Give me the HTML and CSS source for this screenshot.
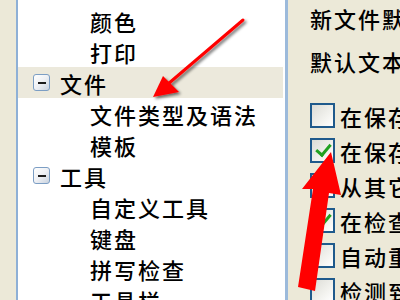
FILE: index.html
```html
<!DOCTYPE html>
<html lang="zh">
<head>
<meta charset="utf-8">
<link rel="stylesheet" href="styles.css">
</head>
<body>
<div class="window">
  <div class="strip"></div>
  <div class="tree">
    <div class="row child">颜色</div>
    <div class="row child">打印</div>
    <div class="row group selected"><span class="toggle"></span>文件</div>
    <div class="row child">文件类型及语法</div>
    <div class="row child">模板</div>
    <div class="row group"><span class="toggle"></span>工具</div>
    <div class="row child">自定义工具</div>
    <div class="row child">键盘</div>
    <div class="row child">拼写检查</div>
    <div class="row child">工具栏</div>
  </div>
  <div class="panel">
    <div class="label first">新文件默认</div>
    <div class="label">默认文本编</div>
    <div class="checks">
      <div class="check"><span class="box"></span>在保存时</div>
      <div class="check"><span class="box checked"></span>在保存时</div>
      <div class="check"><span class="box"></span>从其它程</div>
      <div class="check"><span class="box checked"></span>在检查时</div>
      <div class="check"><span class="box"></span>自动重新</div>
      <div class="check"><span class="box"></span>检测到文</div>
    </div>
  </div>
</div>
<svg class="arrows" width="400" height="300" viewBox="0 0 400 300">
  <defs>
    <filter id="sh" x="-20%" y="-20%" width="140%" height="140%">
      <feGaussianBlur in="SourceAlpha" stdDeviation="1.6"/>
      <feOffset dx="2" dy="2" result="b"/>
      <feComponentTransfer><feFuncA type="linear" slope="0.55"/></feComponentTransfer>
      <feMerge><feMergeNode/><feMergeNode in="SourceGraphic"/></feMerge>
    </filter>
  </defs>
  <g filter="url(#sh)">
    <line x1="243" y1="20" x2="168" y2="84" stroke="#f00" stroke-width="3" stroke-linecap="round"/>
    <polygon points="153,97 163,76 179,92" fill="#f00"/>
  </g>
  <g>
    <polygon points="331,152 302,189 313,189 298,287 315,291 329,193 341,195" fill="#f00"/>
  </g>
</svg>
</body>
</html>
```

FILE: styles.css
```css
html, body {
  margin: 0;
  padding: 0;
  width: 400px;
  height: 300px;
  overflow: hidden;
  background: #ece9d8;
  font-family: "Noto Sans CJK SC", "Noto Sans", sans-serif;
  font-weight: 500;
  color: #000;
}

.window {
  display: flex;
  height: 300px;
}

.strip {
  width: 16px;
  flex: none;
  background: #ece9d8;
}

.tree {
  width: 267px;
  flex: none;
  background: #fff;
  border-left: 2px solid #8eb0d6;
  border-right: 3px solid #9cbadb;
  padding-top: 5px;
  overflow: hidden;
}

.row {
  height: 31px;
  display: flex;
  align-items: center;
  font-size: 22px;
  letter-spacing: 2px;
  white-space: nowrap;
}

.child {
  padding-left: 72px;
}

.group {
  padding-left: 15px;
}

.selected {
  background: #ece9dc;
  margin-right: 2px;
}

.toggle {
  width: 15px;
  height: 15px;
  border: 1px solid #7c9ec4;
  border-radius: 3px;
  background: linear-gradient(135deg, #ffffff 0%, #eef0f4 50%, #c9d2de 100%);
  margin-right: 10px;
  position: relative;
  flex: none;
}

.toggle::after {
  content: "";
  position: absolute;
  left: 4px;
  top: 7px;
  width: 8px;
  height: 2px;
  background: #1b1b1b;
}

.panel {
  flex: 1;
  padding-left: 22px;
  overflow: hidden;
  white-space: nowrap;
  font-size: 22px;
  letter-spacing: 2px;
}

.label {
  height: 30px;
  display: flex;
  align-items: center;
  margin-top: 13px;
}

.label.first {
  margin-top: 3px;
}

.checks {
  margin-top: 27px;
  display: flex;
  flex-direction: column;
  gap: 10px;
}

.check {
  height: 25px;
  display: flex;
  align-items: center;
}

.box {
  width: 21px;
  height: 21px;
  border: 2px solid #1f5a8c;
  background: linear-gradient(135deg, #dcdcd6 0%, #f2f2ee 60%, #ffffff 100%);
  margin-right: 5px;
  flex: none;
  position: relative;
}

.box.checked::after {
  content: "";
  position: absolute;
  left: 7px;
  top: 1px;
  width: 6px;
  height: 12px;
  border-right: 3px solid #21a121;
  border-bottom: 3px solid #21a121;
  transform: rotate(40deg);
}

.arrows {
  position: absolute;
  left: 0;
  top: 0;
  pointer-events: none;
}
```
